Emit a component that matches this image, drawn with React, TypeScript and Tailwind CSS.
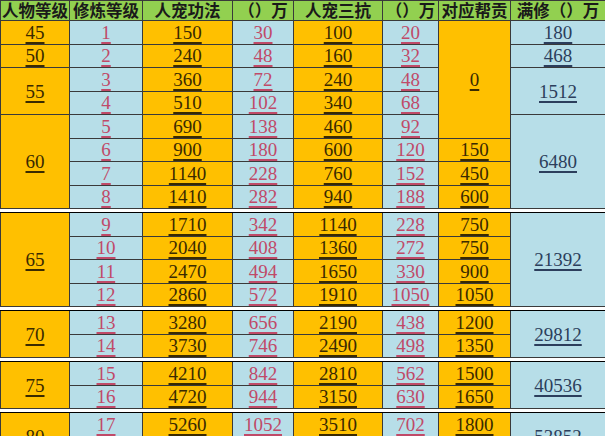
import React from "react";

type Row = { lv: number; a: number; b: number; c: number; d: number };

const rows: Row[] = [
  { lv: 1, a: 150, b: 30, c: 100, d: 20 },
  { lv: 2, a: 240, b: 48, c: 160, d: 32 },
  { lv: 3, a: 360, b: 72, c: 240, d: 48 },
  { lv: 4, a: 510, b: 102, c: 340, d: 68 },
  { lv: 5, a: 690, b: 138, c: 460, d: 92 },
  { lv: 6, a: 900, b: 180, c: 600, d: 120 },
  { lv: 7, a: 1140, b: 228, c: 760, d: 152 },
  { lv: 8, a: 1410, b: 282, c: 940, d: 188 },
  { lv: 9, a: 1710, b: 342, c: 1140, d: 228 },
  { lv: 10, a: 2040, b: 408, c: 1360, d: 272 },
  { lv: 11, a: 2470, b: 494, c: 1650, d: 330 },
  { lv: 12, a: 2860, b: 572, c: 1910, d: 1050 },
  { lv: 13, a: 3280, b: 656, c: 2190, d: 438 },
  { lv: 14, a: 3730, b: 746, c: 2490, d: 498 },
  { lv: 15, a: 4210, b: 842, c: 2810, d: 562 },
  { lv: 16, a: 4720, b: 944, c: 3150, d: 630 },
  { lv: 17, a: 5260, b: 1052, c: 3510, d: 702 },
  { lv: 18, a: 5830, b: 1166, c: 3890, d: 778 },
];

const charGroups: Record<number, [string, number]> = {
  0: ["45", 1],
  1: ["50", 1],
  2: ["55", 2],
  4: ["60", 4],
  8: ["65", 4],
  12: ["70", 2],
  14: ["75", 2],
  16: ["80", 2],
};
const totalGroups: Record<number, [string, number]> = {
  0: ["180", 1],
  1: ["468", 1],
  2: ["1512", 2],
  4: ["6480", 4],
  8: ["21392", 4],
  12: ["29812", 2],
  14: ["40536", 2],
  16: ["53852", 2],
};
const contrib: Record<number, [string, number]> = {
  0: ["0", 5],
  5: ["150", 1],
  6: ["450", 1],
  7: ["600", 1],
  8: ["750", 1],
  9: ["750", 1],
  10: ["900", 1],
  11: ["1050", 1],
  12: ["1200", 1],
  13: ["1350", 1],
  14: ["1500", 1],
  15: ["1650", 1],
  16: ["1800", 1],
  17: ["1950", 1],
};
const separatorsBefore = new Set([8, 12, 14, 16]);

const orange = "bg-[#FFC000] text-[#3a2a00]";
const blueRed = "bg-[#B7DEE8] text-[#c04a68]";
const blueNavy = "bg-[#B7DEE8] text-[#2c3e5c]";
const cellBase =
  "border border-[#3a3a3a] p-0 text-center align-middle underline underline-offset-[3px] decoration-[1.5px] leading-none";

const headers = ["人物等级", "修炼等级", "人宠功法", "（）万", "人宠三抗", "（）万", "对应帮贡", "满修（）万"];
const widths = [69, 73, 90, 61, 89, 56, 72, 95];

export default function App() {
  const body: React.ReactNode[] = [];
  rows.forEach((r, i) => {
    if (separatorsBefore.has(i)) {
      body.push(
        <tr key={"s" + i} className="h-[4px]">
          <td colSpan={8} className="p-0 h-[4px] bg-white border-t border-t-[#8a8a8a] border-b border-b-black"></td>
        </tr>
      );
    }
    const cg = charGroups[i];
    const tg = totalGroups[i];
    const cb = contrib[i];
    body.push(
      <tr key={i} className="h-[23.5px]">
        {cg && (
          <td rowSpan={cg[1]} className={`${cellBase} ${orange}`}>
            {cg[0]}
          </td>
        )}
        <td className={`${cellBase} ${blueRed}`}>{r.lv}</td>
        <td className={`${cellBase} ${orange}`}>{r.a}</td>
        <td className={`${cellBase} ${blueRed}`}>{r.b}</td>
        <td className={`${cellBase} ${orange}`}>{r.c}</td>
        <td className={`${cellBase} ${blueRed}`}>{r.d}</td>
        {cb && (
          <td rowSpan={cb[1]} className={`${cellBase} ${orange}`}>
            {cb[0]}
          </td>
        )}
        {tg && (
          <td rowSpan={tg[1]} className={`${cellBase} ${blueNavy}`}>
            {tg[0]}
          </td>
        )}
      </tr>
    );
  });

  return (
    <div className="w-[605px] h-[436px] overflow-hidden bg-white">
      <table
        className="table-fixed border-collapse w-[605px] text-[19px]"
        style={{ fontFamily: '"Liberation Serif", "Noto Sans CJK SC", serif' }}
      >
        <colgroup>
          {widths.map((w, i) => (
            <col key={i} style={{ width: w }} />
          ))}
        </colgroup>
        <thead>
          <tr className="h-[20px]">
            {headers.map((h, i) => (
              <th
                key={i}
                className="border border-[#3a3a3a] bg-[#92D050] p-0 text-center align-middle whitespace-nowrap text-[16.5px] font-bold leading-none text-[#1a1a1a]"
                style={{ fontFamily: '"Noto Sans CJK SC", sans-serif' }}
              >
                {h}
              </th>
            ))}
          </tr>
        </thead>
        <tbody>{body}</tbody>
      </table>
    </div>
  );
}
